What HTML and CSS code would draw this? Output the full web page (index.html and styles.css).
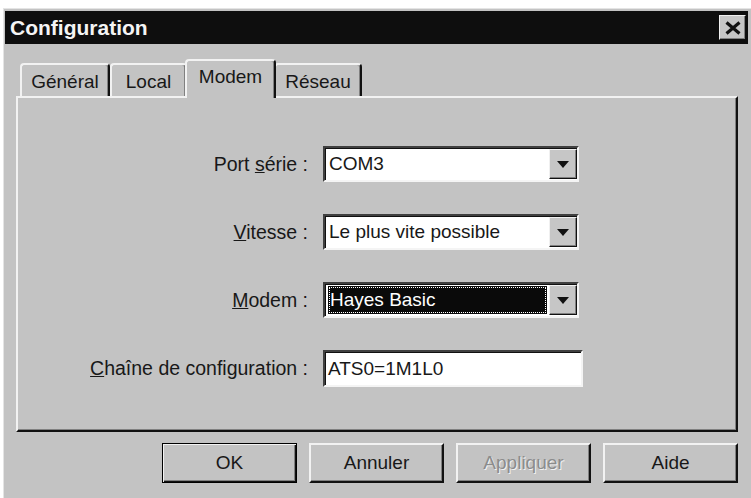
FILE: index.html
```html
<!DOCTYPE html>
<html lang="fr">
<head>
<meta charset="utf-8">
<title>Configuration</title>
<link rel="stylesheet" href="styles.css">
</head>
<body>
<div class="window">
  <div class="titlebar">
    <span class="title">Configuration</span>
    <button class="close" aria-label="Fermer">
      <svg width="16" height="14" viewBox="0 0 16 14"><path d="M1.5 1.5 L14.5 12.5 M14.5 1.5 L1.5 12.5" stroke="#111" stroke-width="3.2" fill="none"/></svg>
    </button>
  </div>
  <div class="content">
    <div class="tabs">
      <div class="tab t-general">Général</div>
      <div class="tab t-local">Local</div>
      <div class="tab t-modem active">Modem</div>
      <div class="tab t-reseau">Réseau</div>
    </div>
    <div class="panel">
      <div class="form">
        <label class="lbl">Port <u>s</u>érie :</label>
        <div class="combo"><span class="value">COM3</span><span class="drop"><i class="tri"></i></span></div>

        <label class="lbl"><u>V</u>itesse :</label>
        <div class="combo"><span class="value">Le plus vite possible</span><span class="drop"><i class="tri"></i></span></div>

        <label class="lbl"><u>M</u>odem :</label>
        <div class="combo"><span class="value sel">Hayes Basic</span><span class="drop"><i class="tri"></i></span></div>

        <label class="lbl"><u>C</u>haîne de configuration :</label>
        <div class="field">ATS0=1M1L0</div>
      </div>
    </div>
    <div class="buttons">
      <button class="btn default">OK</button>
      <button class="btn">Annuler</button>
      <button class="btn disabled">Appliquer</button>
      <button class="btn">Aide</button>
    </div>
  </div>
</div>
</body>
</html>
```

FILE: styles.css
```css
html, body {
  margin: 0;
  padding: 0;
  background: #ffffff;
}

body {
  font-family: "Liberation Sans", Arial, sans-serif;
  font-size: 19px;
  color: #181818;
}

.window {
  box-sizing: border-box;
  margin: 8px 0 0 3px;
  width: 748px;
  height: 490px;
  background: #c3c3c3;
  border-top: 1px solid #e4e4e4;
  border-left: 1px solid #e4e4e4;
  padding: 2px 3px 0 1px;
}

.titlebar {
  height: 33px;
  background: #0e0e0e;
  display: flex;
  align-items: center;
  justify-content: space-between;
  padding: 0 2px 0 5px;
}

.title {
  color: #f4f4f4;
  font-weight: bold;
  font-size: 21px;
}

.close {
  box-sizing: border-box;
  width: 27px;
  height: 25px;
  padding: 0;
  margin: 0;
  display: flex;
  align-items: center;
  justify-content: center;
  background: #c6c6c6;
  border: 1px solid;
  border-color: #f0f0f0 #111 #111 #f0f0f0;
  box-shadow: inset -1px -1px #808080;
}

.content {
  padding: 0 10px 0 11px;
}

.tabs {
  position: relative;
  z-index: 1;
  display: flex;
  align-items: flex-end;
  height: 39px;
  margin-top: 15px;
  margin-bottom: -2px;
  padding-left: 4px;
}

.tab {
  box-sizing: border-box;
  height: 33px;
  margin-bottom: 2px;
  display: flex;
  align-items: center;
  justify-content: center;
  background: #c3c3c3;
  border-top: 2px solid #f2f2f2;
  border-left: 2px solid #f2f2f2;
  border-right: 2px solid #111;
  box-shadow: inset -1px 0 #808080;
  border-radius: 4px 4px 0 0;
  padding-top: 2px;
}

.t-general { width: 90px; }
.t-local { width: 77px; }
.t-modem { width: 91px; }
.t-reseau { width: 88px; }

.tab.active {
  height: 39px;
  margin: 0 -2px;
  position: relative;
  z-index: 2;
  padding-top: 0;
  padding-bottom: 6px;
}

.panel {
  box-sizing: border-box;
  height: 336px;
  border: 2px solid;
  border-color: #f2f2f2 #111 #111 #f2f2f2;
  box-shadow: inset -1px -1px #808080;
  padding-top: 48px;
}

.form {
  display: grid;
  grid-template-columns: 290px auto;
  column-gap: 15px;
  row-gap: 32px;
  align-items: center;
  justify-content: start;
}

.lbl {
  text-align: right;
  font-size: 19.5px;
}

.combo,
.field {
  box-sizing: border-box;
  height: 36px;
  background: #ffffff;
  border: 2px solid;
  border-color: #404040 #f4f4f4 #f4f4f4 #404040;
  box-shadow: inset 1px 1px #111;
}

.combo {
  width: 256px;
  display: flex;
  align-items: stretch;
}

.value {
  flex: 1;
  display: flex;
  align-items: center;
  padding-left: 4px;
}

.value.sel {
  margin: 2px 2px 2px 3px;
  padding-left: 2px;
  background: #0a0a0a;
  color: #ffffff;
  outline: 1px dotted #ffffff;
  outline-offset: -2px;
}

.drop {
  box-sizing: border-box;
  width: 28px;
  margin: 1px 0;
  background: #c6c6c6;
  border: 1px solid;
  border-color: #f0f0f0 #111 #111 #f0f0f0;
  box-shadow: inset -1px -1px #808080;
  display: flex;
  align-items: center;
  justify-content: center;
}

.tri {
  width: 0;
  height: 0;
  border-left: 6px solid transparent;
  border-right: 6px solid transparent;
  border-top: 7px solid #111;
}

.field {
  width: 260px;
  height: 37px;
  display: flex;
  align-items: center;
  padding-left: 3px;
}

.buttons {
  display: flex;
  justify-content: flex-end;
  gap: 12px;
  margin-top: 11px;
}

.btn {
  box-sizing: border-box;
  width: 135px;
  height: 40px;
  font-family: "Liberation Sans", Arial, sans-serif;
  font-size: 19px;
  color: #181818;
  background: #c3c3c3;
  border: 2px solid;
  border-color: #f2f2f2 #111 #111 #f2f2f2;
  box-shadow: inset -1px -1px #808080;
  padding: 0;
}

.btn.default {
  border: 1px solid #000;
  box-shadow: inset 1px 1px #f2f2f2, inset -1px -1px #111, inset -2px -2px #808080;
}

.btn.disabled {
  color: #8c8c8c;
  text-shadow: 1px 1px #f2f2f2;
}
```
